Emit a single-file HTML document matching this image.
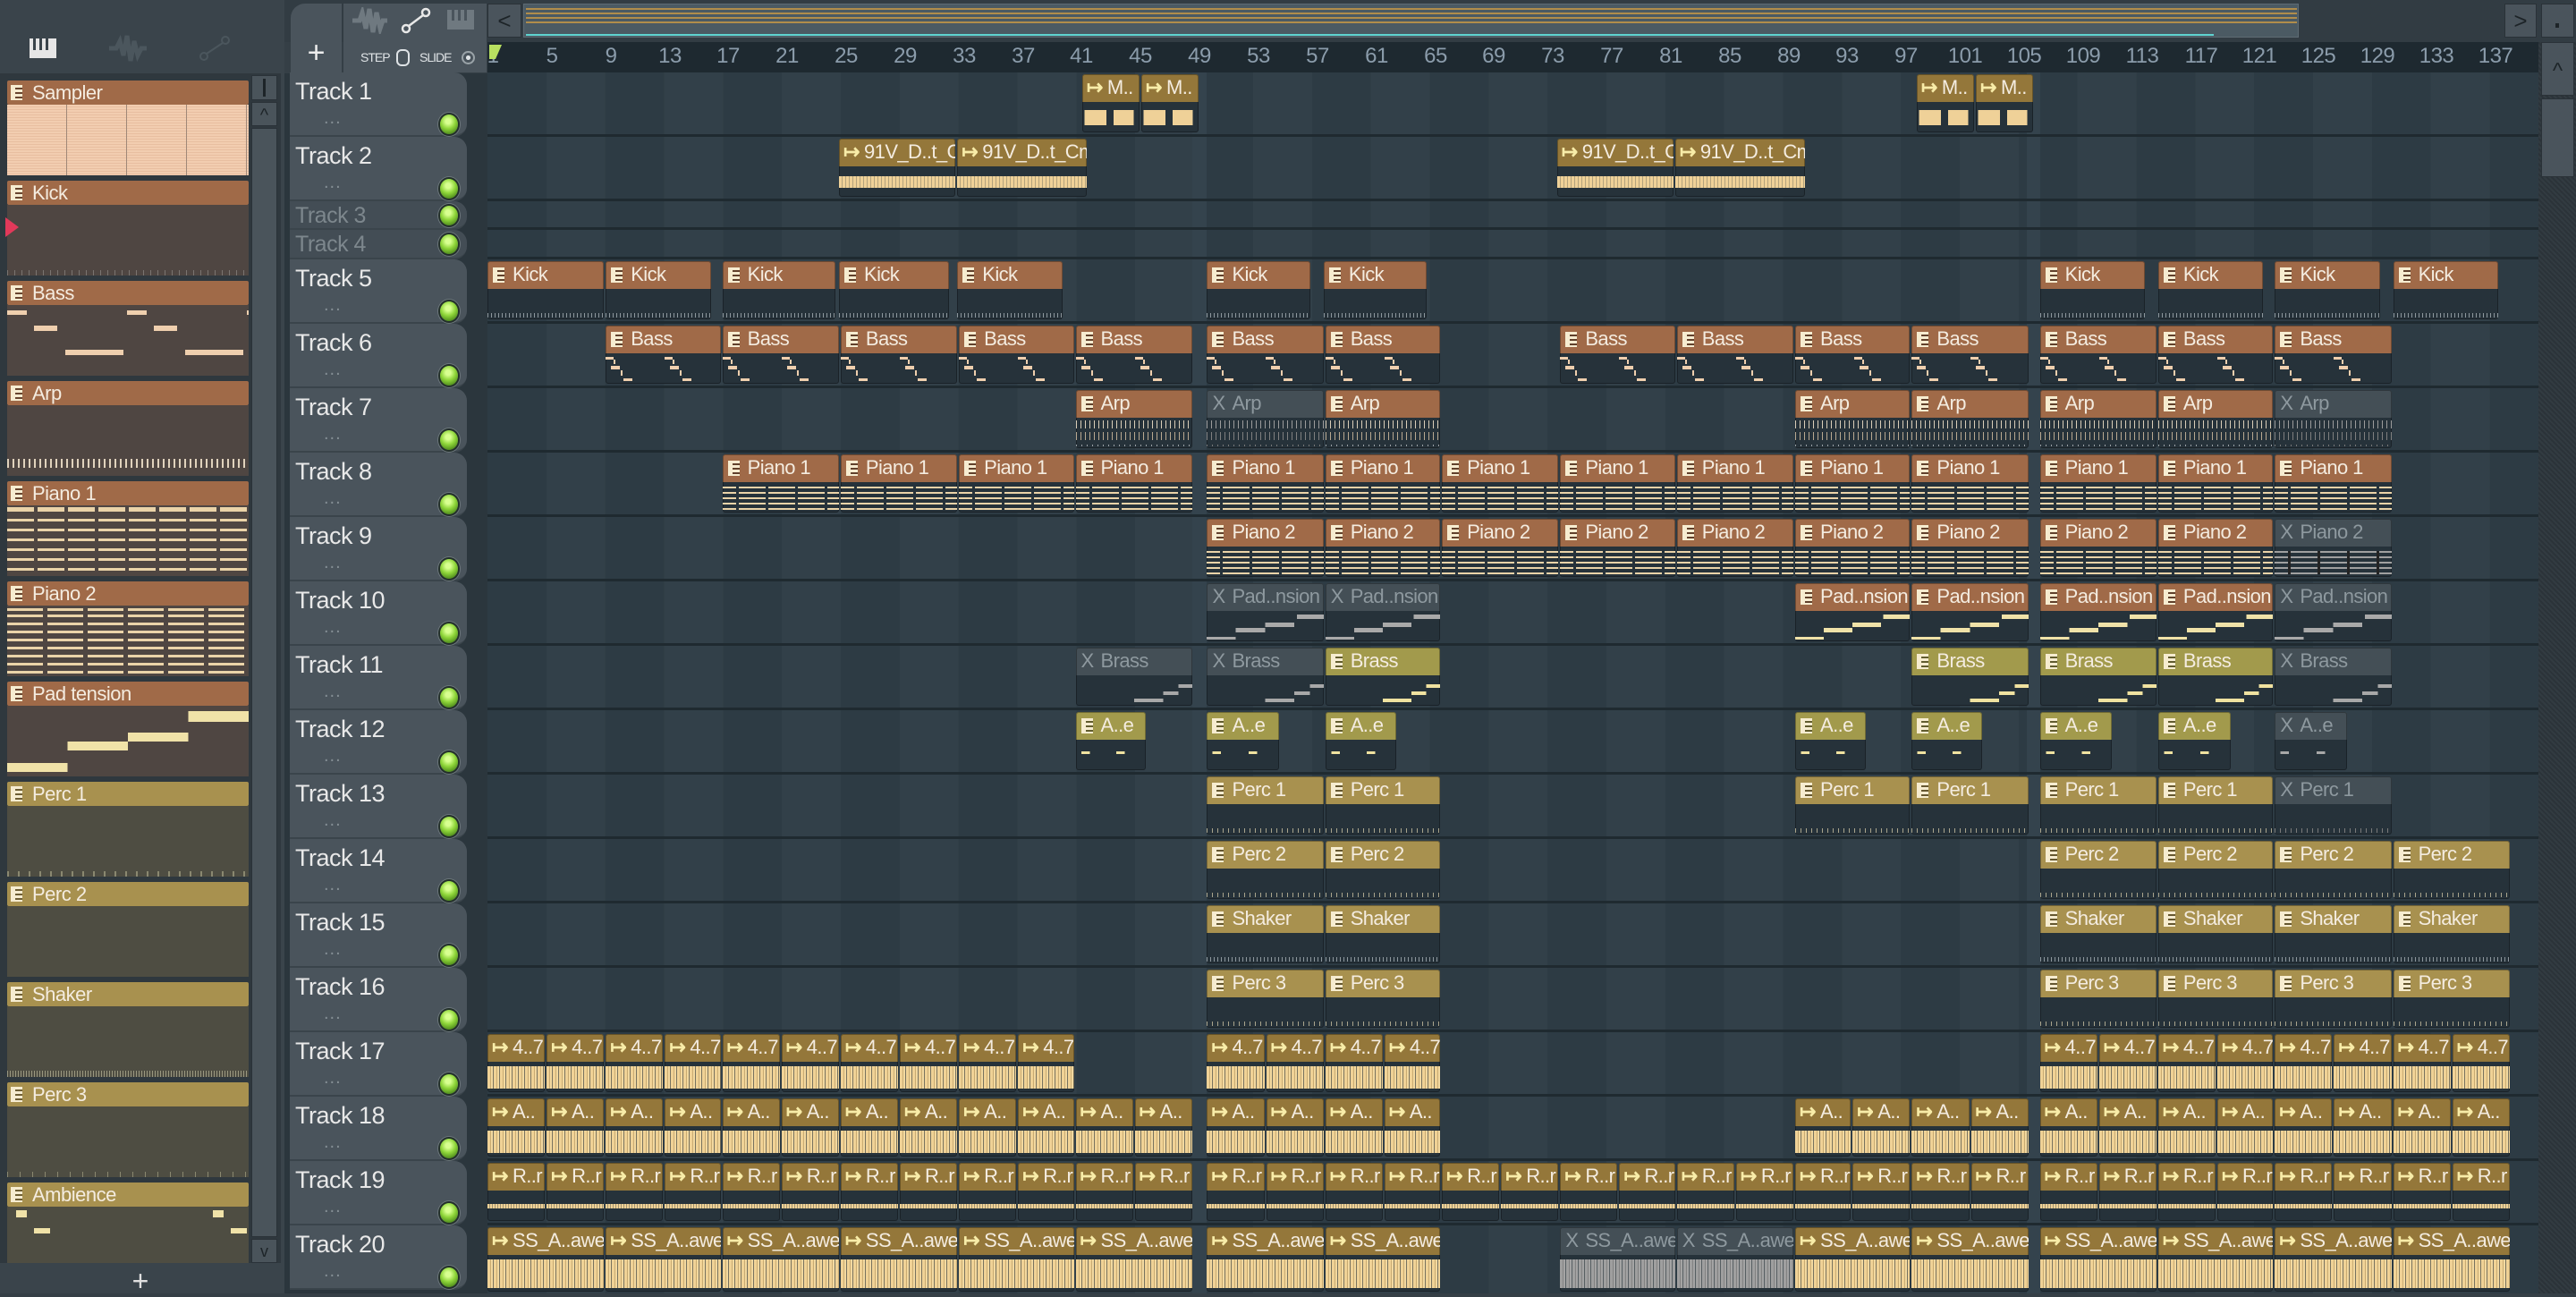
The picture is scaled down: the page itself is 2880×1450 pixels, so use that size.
<!DOCTYPE html>
<html><head><meta charset="utf-8"><style>
*{box-sizing:border-box}
body{margin:0;width:2880px;height:1446px;overflow:hidden;background:#353f46;font-family:"Liberation Sans Narrow","Liberation Sans",sans-serif;position:relative}
.abs{position:absolute}
#lp{position:absolute;left:0;top:0;width:318px;height:1446px;background:#3a444b}
#lpl{position:absolute;left:0;top:82px;width:314px;height:1330px;background:#2f383e}
.li{position:absolute;left:8px;width:270px;height:106px}
.li .h{height:27px;line-height:27px;font-size:22px;letter-spacing:-0.5px;color:#f4ece0;padding-left:28px;position:relative;border-radius:2px;white-space:nowrap}
.li .h::before{content:"";position:absolute;left:4px;top:5px;width:13px;height:17px;background:linear-gradient(90deg,#f6ecd0 0 5px,transparent 5px),repeating-linear-gradient(180deg,#f6ecd0 0 3px,rgba(0,0,0,.35) 3px 5px)}
.li .v{height:79px;position:relative;overflow:hidden}
.br .h{background:#a06a48}.br .v{background:#4f4642}
.gd .h{background:#a8914f}.gd .v{background:#4e4d42}
#thc{position:absolute;left:318px;top:82px;width:227px;height:1364px;background:#2b363d}
.th{position:absolute;left:6px;width:198px;background:#4a545c;border-radius:0 14px 14px 0;border-bottom:2px solid #3a444b}
.th b{position:absolute;left:6px;top:6px;font-weight:normal;font-size:27px;letter-spacing:-0.5px;color:#e8e8e8;white-space:nowrap}
.th i{position:absolute;left:38px;top:40px;font-style:normal;font-size:20px;color:#848e94;letter-spacing:1px}
.th s{position:absolute;left:168px;top:47px;width:20px;height:22px;border-radius:50%;background:radial-gradient(circle at 45% 35%,#d8ff90 0 15%,#8fd63a 45%,#4f8c1c 80%);box-shadow:0 0 0 2px #23302a,0 0 0 3px #6b757b}
.th.sm{background:#434d55}.th.sm b{color:#7d878d;top:2px;font-size:25px}.th.sm s{top:5px}
#grid{position:absolute;left:545px;top:81px;width:2293px;height:1365px;background:repeating-linear-gradient(90deg,#2d3b44 0 65.84px,#324049 65.84px 131.68px)}
.row{position:absolute;left:545px;width:2293px;border-bottom:3px solid #1f2a30}
.c{position:absolute;top:2px;bottom:2px;left:calc(var(--s)*1.8367px - 545.5px);width:calc((var(--e) - var(--s))*1.8367px - 2px);background:linear-gradient(var(--h) 0 31px,#26323a 31px);border-radius:3px;overflow:hidden;white-space:nowrap;font-weight:normal;font-size:22px;letter-spacing:-0.6px;line-height:30px;color:#f4ece0;padding-left:28px;box-shadow:inset 0 0 0 1px rgba(0,0,0,.3)}
.c::before{content:"";position:absolute;left:6px;top:7px;width:13px;height:17px;background:linear-gradient(90deg,#f6ecd0 0 5px,transparent 5px),repeating-linear-gradient(180deg,#f6ecd0 0 3px,rgba(0,0,0,.4) 3px 5px)}
.c::after{content:"";position:absolute;left:0;right:0;top:34px;bottom:2px}
.p{--h:#a06a48}.o{--h:#a29a4c}.g{--h:#a8914f}.a{--h:#94773a}
.m{--h:#444f56;color:#8e999f}
.a::before{content:"↦";background:none;width:auto;height:auto;top:0;left:5px;color:#f8eca8;font-weight:bold;font-size:22px}
.m::before{content:"X";background:none;width:auto;height:auto;top:0;left:6px;color:#8e999f;font-size:22px}
.m::after{filter:grayscale(1) brightness(.75)}
.kk::after{background:repeating-linear-gradient(90deg,#8d979d 0 1px,transparent 1px 4px) 0 100%/100% 5px no-repeat}
.pc::after{background:repeating-linear-gradient(90deg,#a9a48c 0 1px,transparent 1px 6px) 0 100%/100% 5px no-repeat}
.bs::after{background:linear-gradient(90deg,#efcfae 0 9px,transparent 9px) 0 1px/66px 3px repeat-x,linear-gradient(90deg,transparent 0 9px,#efcfae 9px 11px,transparent 11px) 0 4px/66px 5px repeat-x,linear-gradient(90deg,transparent 0 6px,#efcfae 6px 16px,transparent 16px) 0 11px/66px 4px repeat-x,linear-gradient(90deg,transparent 0 17px,#efcfae 17px 19px,transparent 19px) 0 16px/66px 6px repeat-x,linear-gradient(90deg,transparent 0 20px,#efcfae 20px 30px,transparent 30px) 0 25px/66px 3px repeat-x}
.ar::after{background:repeating-linear-gradient(90deg,#d9cdb8 0 1px,transparent 1px 5px) 0 0/100% 9px no-repeat,repeating-linear-gradient(90deg,#b8a890 0 1px,transparent 1px 5px) 0 13px/100% 9px no-repeat,repeating-linear-gradient(90deg,#9aa0a4 0 1px,transparent 1px 6px) 0 27px/100% 7px no-repeat}
.pn::after{top:36px;bottom:3px;background:repeating-linear-gradient(90deg,transparent 0 15px,#26323a 15px 18px,transparent 18px 33px),repeating-linear-gradient(180deg,#ead3a8 0 2px,transparent 2px 6px)}
.pd::after{background:linear-gradient(90deg,transparent 0 77%,#f0e2a8 77%) 0 1px/100% 5px no-repeat,linear-gradient(90deg,transparent 0 50%,#f0e2a8 50% 75%,transparent 75%) 0 10px/100% 5px no-repeat,linear-gradient(90deg,transparent 0 25%,#f0e2a8 25% 50%,transparent 50%) 0 16px/100% 5px no-repeat,linear-gradient(90deg,#f0e2a8 0 25%,transparent 25%) 0 26px/100% 5px no-repeat}
.bz::after{background:linear-gradient(90deg,transparent 0 88%,#f0e2a0 88%) 0 7px/100% 4px no-repeat,linear-gradient(90deg,transparent 0 75%,#f0e2a0 75% 88%,transparent 88%) 0 15px/100% 4px no-repeat,linear-gradient(90deg,transparent 0 50%,#f0e2a0 50% 75%,transparent 75%) 0 23px/100% 4px no-repeat,linear-gradient(90deg,#f0e2a0 0 50%,transparent 50%) 0 31px/100% 4px no-repeat}
.ae::after{background:linear-gradient(90deg,transparent 0 8%,#f0e2a0 8% 20%,transparent 20% 58%,#f0e2a0 58% 70%,transparent 70%) 0 10px/100% 3px no-repeat,linear-gradient(90deg,#f0e2a0 0 4%,transparent 4%) 0 32px/100% 3px no-repeat}
.wv::after{top:36px;bottom:4px;background:repeating-linear-gradient(90deg,#f0d296 0 3px,#c9ab72 3px 4px,#f3d9a0 4px 6px,rgba(240,210,150,.4) 6px 7px)}
.wt::after{top:46px;bottom:14px;background:repeating-linear-gradient(90deg,#f0d296 0 2px,rgba(240,210,150,.6) 2px 3px)}
.wb::after{top:40px;bottom:8px;background:linear-gradient(90deg,transparent 0 4%,#efd198 4% 42%,transparent 42% 55%,#efd198 55% 90%,transparent 90%)}
.w2::after{top:42px;bottom:10px;background:repeating-linear-gradient(90deg,#efd198 0 3px,rgba(239,209,152,.7) 3px 4px)}
#ruler{position:absolute;left:545px;top:47px;width:2293px;height:34px;background:#1e2930}
#ruler span{position:absolute;top:2px;transform:translateX(-50%);font-size:24px;color:#8b9cab;letter-spacing:-0.5px}
</style></head><body>

<div id="lp"></div>
<div class="abs" style="left:33px;top:43px;width:30px;height:22px;background:#e6e6e6"></div>
<div class="abs" style="left:37px;top:43px;width:3px;height:13px;background:#3a444b"></div>
<div class="abs" style="left:44px;top:43px;width:3px;height:13px;background:#3a444b"></div>
<div class="abs" style="left:51px;top:43px;width:3px;height:13px;background:#3a444b"></div>
<svg class="abs" style="left:120px;top:38px" width="46" height="32"><path d="M2 16 L10 16 L14 8 L18 24 L22 2 L26 30 L30 8 L34 24 L38 16 L44 16" stroke="#4b565d" stroke-width="5" fill="none"/></svg>
<svg class="abs" style="left:222px;top:38px" width="36" height="32"><circle cx="6" cy="25" r="4" stroke="#4b565d" stroke-width="2" fill="none"/><circle cx="30" cy="7" r="4" stroke="#4b565d" stroke-width="2" fill="none"/><path d="M9 22 L27 10" stroke="#4b565d" stroke-width="2"/></svg>
<div id="lpl"></div>
<div class="abs" style="left:281px;top:84px;width:29px;height:28px;background:#4a545b;border:1px solid #2a3238"></div>
<div class="abs" style="left:294px;top:88px;width:3px;height:20px;background:#1d2428"></div>
<div class="abs" style="left:281px;top:114px;width:29px;height:27px;background:#4a545b;border:1px solid #2a3238;color:#1d2428;font-size:20px;text-align:center;line-height:28px">^</div>
<div class="abs" style="left:281px;top:143px;width:29px;height:1240px;background:#4a545b;border:1px solid #2a3238"></div>
<div class="abs" style="left:281px;top:1385px;width:29px;height:27px;background:#4a545b;border:1px solid #2a3238;color:#1d2428;font-size:18px;text-align:center;line-height:26px">v</div>
<div class="abs" style="left:0;top:1414px;width:314px;height:32px;background:#3a444b;color:#e0e0e0;font-size:32px;text-align:center;line-height:36px;font-family:'Liberation Sans',sans-serif">+</div>

<div class="li br" style="top:90px"><div class="h">Sampler</div><div class="v" style="background:repeating-linear-gradient(90deg,transparent 0 66px,#a08878 66px 67px),repeating-linear-gradient(180deg,#f2cdb0 0 2px,#e8bea0 2px 3px)"></div></div>
<div class="li br" style="top:202px"><div class="h">Kick</div><div class="v" style="background:repeating-linear-gradient(90deg,#7a7470 0 1px,transparent 1px 8px) 0 100%/100% 6px no-repeat,#4f4642"></div></div>
<div class="li br" style="top:314px"><div class="h">Bass</div><div class="v" style="background:linear-gradient(90deg,#efcfae 0 22px,transparent 22px) 0 6px/134px 5px repeat-x,linear-gradient(90deg,transparent 0 30px,#efcfae 30px 56px,transparent 56px) 0 23px/134px 6px repeat-x,linear-gradient(90deg,transparent 0 65px,#efcfae 65px 130px,transparent 130px) 0 50px/134px 6px repeat-x,#4f4642"></div></div>
<div class="li br" style="top:426px"><div class="h">Arp</div><div class="v" style="background:repeating-linear-gradient(90deg,#e0d2bc 0 2px,transparent 2px 6px) 0 60px/100% 10px no-repeat,#4f4642"></div></div>
<div class="li br" style="top:538px"><div class="h">Piano 1</div><div class="v" style="background:repeating-linear-gradient(90deg,transparent 0 30px,#4f4642 30px 34px),repeating-linear-gradient(180deg,#ead3a8 0 3px,transparent 3px 11px) 0 4px,#4f4642"></div></div>
<div class="li br" style="top:650px"><div class="h">Piano 2</div><div class="v" style="background:repeating-linear-gradient(90deg,transparent 0 40px,#4f4642 40px 45px),repeating-linear-gradient(180deg,#ead3a8 0 3px,transparent 3px 9px) 0 10px,#4f4642"></div></div>
<div class="li br" style="top:762px"><div class="h">Pad tension</div><div class="v" style="background:linear-gradient(90deg,transparent 0 75%,#f0e2a8 75%) 0 6px/100% 12px no-repeat,linear-gradient(90deg,transparent 0 50%,#f0e2a8 50% 75%,transparent 75%) 0 30px/100% 10px no-repeat,linear-gradient(90deg,transparent 0 25%,#f0e2a8 25% 50%,transparent 50%) 0 40px/100% 10px no-repeat,linear-gradient(90deg,#f0e2a8 0 25%,transparent 25%) 0 64px/100% 10px no-repeat,#4f4642"></div></div>
<div class="li gd" style="top:874px"><div class="h">Perc 1</div><div class="v" style="background:repeating-linear-gradient(90deg,#8a8870 0 2px,transparent 2px 12px) 0 100%/100% 6px no-repeat,#4e4d42"></div></div>
<div class="li gd" style="top:986px"><div class="h">Perc 2</div><div class="v" style="background:#4e4d42"></div></div>
<div class="li gd" style="top:1098px"><div class="h">Shaker</div><div class="v" style="background:repeating-linear-gradient(90deg,#9a9880 0 1px,transparent 1px 3px) 0 100%/100% 7px no-repeat,#4e4d42"></div></div>
<div class="li gd" style="top:1210px"><div class="h">Perc 3</div><div class="v" style="background:repeating-linear-gradient(90deg,#8a8870 0 1px,transparent 1px 14px) 0 100%/100% 6px no-repeat,#4e4d42"></div></div>
<div class="li gd" style="top:1322px;height:90px"><div class="h">Ambience</div><div class="v" style="height:63px;background:linear-gradient(90deg,#f0e2a8 0 12px,transparent 12px) 10px 4px/220px 8px repeat-x,linear-gradient(90deg,#f0e2a8 0 18px,transparent 18px) 30px 24px/220px 6px repeat-x,#4e4d42"></div></div>
<div class="abs" style="left:6px;top:243px;width:0;height:0;border-top:11px solid transparent;border-bottom:11px solid transparent;border-left:15px solid #e2395a"></div>

<div class="abs" style="left:318px;top:0;width:2562px;height:47px;background:#323c43"></div>
<div class="abs" style="left:325px;top:4px;width:57px;height:77px;background:#4a545c;border-radius:16px 0 0 0;color:#eee;font-size:34px;text-align:center;line-height:110px;font-family:'Liberation Sans',sans-serif">+</div>
<div class="abs" style="left:384px;top:4px;width:160px;height:77px;background:#4a545c"></div>
<svg class="abs" style="left:392px;top:8px" width="42" height="30"><path d="M2 15 L10 15 L13 6 L17 24 L21 2 L25 28 L29 6 L33 24 L36 15 L41 15" stroke="#6f7980" stroke-width="5" fill="none"/></svg>
<svg class="abs" style="left:448px;top:8px" width="34" height="30"><circle cx="6" cy="24" r="4" stroke="#e8e8e8" stroke-width="2.5" fill="none"/><circle cx="28" cy="6" r="4" stroke="#e8e8e8" stroke-width="2.5" fill="none"/><path d="M9 21 L25 9" stroke="#e8e8e8" stroke-width="2.5"/></svg>
<div class="abs" style="left:500px;top:11px;width:30px;height:22px;background:#6f7980"></div>
<div class="abs" style="left:505px;top:11px;width:3px;height:12px;background:#4a545c"></div>
<div class="abs" style="left:512px;top:11px;width:3px;height:12px;background:#4a545c"></div>
<div class="abs" style="left:519px;top:11px;width:3px;height:12px;background:#4a545c"></div>
<div class="abs" style="left:403px;top:56px;font-size:14px;letter-spacing:-1px;color:#dfe3e6">STEP</div>
<div class="abs" style="left:443px;top:55px;width:15px;height:19px;border:2px solid #dfe3e6;border-radius:6px"></div>
<div class="abs" style="left:469px;top:56px;font-size:14px;letter-spacing:-1px;color:#dfe3e6">SLIDE</div>
<div class="abs" style="left:516px;top:57px;width:15px;height:15px;border:2px solid #9aa3a8;border-radius:50%;background:radial-gradient(#dfe3e6 0 30%,transparent 35%)"></div>
<div class="abs" style="left:545px;top:4px;width:38px;height:38px;background:#4a545c;border:1px solid #2a3238;color:#1d2428;font-size:26px;text-align:center;line-height:36px">&lt;</div>
<div class="abs" style="left:585px;top:4px;width:1985px;height:38px;background:#4b5a63;border:1px solid #5e6b73"></div>
<div class="abs" style="left:588px;top:9px;width:1980px;height:18px;background:repeating-linear-gradient(180deg,#c99a45 0 2px,transparent 2px 5px);opacity:.8"></div>
<div class="abs" style="left:588px;top:38px;width:1887px;height:2px;background:#5fd3d0"></div>
<div class="abs" style="left:2800px;top:4px;width:36px;height:38px;background:#4a545c;border:1px solid #2a3238;color:#1d2428;font-size:26px;text-align:center;line-height:36px">&gt;</div>
<div class="abs" style="left:2841px;top:4px;width:37px;height:38px;background:#4a545c;border:1px solid #2a3238"></div>
<div class="abs" style="left:2857px;top:26px;width:4px;height:5px;background:#1d2428"></div>

<div id="ruler">
<span style="left:6px">1</span><span style="left:72px">5</span><span style="left:138px">9</span><span style="left:204px">13</span><span style="left:269px">17</span><span style="left:335px">21</span><span style="left:401px">25</span><span style="left:467px">29</span><span style="left:533px">33</span><span style="left:599px">37</span><span style="left:664px">41</span><span style="left:730px">45</span><span style="left:796px">49</span><span style="left:862px">53</span><span style="left:928px">57</span><span style="left:994px">61</span><span style="left:1060px">65</span><span style="left:1125px">69</span><span style="left:1191px">73</span><span style="left:1257px">77</span><span style="left:1323px">81</span><span style="left:1389px">85</span><span style="left:1455px">89</span><span style="left:1520px">93</span><span style="left:1586px">97</span><span style="left:1652px">101</span><span style="left:1718px">105</span><span style="left:1784px">109</span><span style="left:1850px">113</span><span style="left:1916px">117</span><span style="left:1981px">121</span><span style="left:2047px">125</span><span style="left:2113px">129</span><span style="left:2179px">133</span><span style="left:2245px">137</span>
</div>
<div class="abs" style="left:547px;top:50px;width:0;height:0;border-left:7px solid #b8e060;border-right:7px solid transparent;border-top:16px solid #b8e060"></div>

<div class="abs" style="left:2838px;top:47px;width:42px;height:1399px;background:repeating-linear-gradient(45deg,#2b3339 0 2px,#323b41 2px 4px)"></div>
<div class="abs" style="left:2841px;top:47px;width:37px;height:60px;background:#4a545c;border:1px solid #2a3238;color:#1d2428;font-size:24px;text-align:center;line-height:64px">^</div>
<div class="abs" style="left:2841px;top:110px;width:37px;height:88px;background:#4a545c;border:1px solid #2a3238"></div>

<div id="thc"></div>
<div class="th" style="top:81px;height:72px;left:324px"><b>Track 1</b><i>...</i><s></s></div>
<div class="th" style="top:153px;height:72px;left:324px"><b>Track 2</b><i>...</i><s></s></div>
<div class="th sm" style="top:225px;height:32px;left:324px"><b>Track 3</b><s></s></div>
<div class="th sm" style="top:257px;height:33px;left:324px"><b>Track 4</b><s></s></div>
<div class="th" style="top:290px;height:72px;left:324px"><b>Track 5</b><i>...</i><s></s></div>
<div class="th" style="top:362px;height:72px;left:324px"><b>Track 6</b><i>...</i><s></s></div>
<div class="th" style="top:434px;height:72px;left:324px"><b>Track 7</b><i>...</i><s></s></div>
<div class="th" style="top:506px;height:72px;left:324px"><b>Track 8</b><i>...</i><s></s></div>
<div class="th" style="top:578px;height:72px;left:324px"><b>Track 9</b><i>...</i><s></s></div>
<div class="th" style="top:650px;height:72px;left:324px"><b>Track 10</b><i>...</i><s></s></div>
<div class="th" style="top:722px;height:72px;left:324px"><b>Track 11</b><i>...</i><s></s></div>
<div class="th" style="top:794px;height:72px;left:324px"><b>Track 12</b><i>...</i><s></s></div>
<div class="th" style="top:866px;height:72px;left:324px"><b>Track 13</b><i>...</i><s></s></div>
<div class="th" style="top:938px;height:72px;left:324px"><b>Track 14</b><i>...</i><s></s></div>
<div class="th" style="top:1010px;height:72px;left:324px"><b>Track 15</b><i>...</i><s></s></div>
<div class="th" style="top:1082px;height:72px;left:324px"><b>Track 16</b><i>...</i><s></s></div>
<div class="th" style="top:1154px;height:72px;left:324px"><b>Track 17</b><i>...</i><s></s></div>
<div class="th" style="top:1226px;height:72px;left:324px"><b>Track 18</b><i>...</i><s></s></div>
<div class="th" style="top:1298px;height:72px;left:324px"><b>Track 19</b><i>...</i><s></s></div>
<div class="th" style="top:1370px;height:72px;left:324px"><b>Track 20</b><i>...</i><s></s></div>

<div id="grid"></div>
<div class="abs" style="left:1333px;top:81px;width:16px;height:1365px;background:#34434d"></div>
<div class="abs" style="left:2266px;top:81px;width:15px;height:1365px;background:#34434d"></div>

<div class="row" style="top:81px;height:72px">
<b class="c a wb" style="--s:659;--e:695">M..</b><b class="c a wb" style="--s:695;--e:731">M..</b><b class="c a wb" style="--s:1167;--e:1203">M..</b><b class="c a wb" style="--s:1203;--e:1239">M..</b>
</div>
<div class="row" style="top:153px;height:72px">
<b class="c a w2" style="--s:511;--e:583">91V_D..t_Cm</b><b class="c a w2" style="--s:583;--e:663">91V_D..t_Cm</b><b class="c a w2" style="--s:948;--e:1020">91V_D..t_Cm</b><b class="c a w2" style="--s:1020;--e:1100">91V_D..t_Cm</b>
</div>
<div class="row" style="top:225px;height:32px"></div>
<div class="row" style="top:257px;height:33px"></div>
<div class="row" style="top:290px;height:72px">
<b class="c p kk" style="--s:297;--e:369">Kick</b><b class="c p kk" style="--s:369;--e:434">Kick</b><b class="c p kk" style="--s:440;--e:510">Kick</b><b class="c p kk" style="--s:511;--e:579">Kick</b><b class="c p kk" style="--s:583;--e:648">Kick</b><b class="c p kk" style="--s:735;--e:799">Kick</b><b class="c p kk" style="--s:806;--e:870">Kick</b><b class="c p kk" style="--s:1242;--e:1307">Kick</b><b class="c p kk" style="--s:1314;--e:1379">Kick</b><b class="c p kk" style="--s:1385;--e:1450">Kick</b><b class="c p kk" style="--s:1457;--e:1522">Kick</b>
</div>
<div class="row" style="top:362px;height:72px">
<b class="c p bs" style="--s:369;--e:440">Bass</b><b class="c p bs" style="--s:440;--e:512">Bass</b><b class="c p bs" style="--s:512;--e:584">Bass</b><b class="c p bs" style="--s:584;--e:655">Bass</b><b class="c p bs" style="--s:655;--e:727">Bass</b><b class="c p bs" style="--s:735;--e:807">Bass</b><b class="c p bs" style="--s:807;--e:878">Bass</b><b class="c p bs" style="--s:950;--e:1021">Bass</b><b class="c p bs" style="--s:1021;--e:1093">Bass</b><b class="c p bs" style="--s:1093;--e:1164">Bass</b><b class="c p bs" style="--s:1164;--e:1236">Bass</b><b class="c p bs" style="--s:1242;--e:1314">Bass</b><b class="c p bs" style="--s:1314;--e:1385">Bass</b><b class="c p bs" style="--s:1385;--e:1457">Bass</b>
</div>
<div class="row" style="top:434px;height:72px">
<b class="c p ar" style="--s:655;--e:727">Arp</b><b class="c m ar" style="--s:735;--e:807">Arp</b><b class="c p ar" style="--s:807;--e:878">Arp</b><b class="c p ar" style="--s:1093;--e:1164">Arp</b><b class="c p ar" style="--s:1164;--e:1236">Arp</b><b class="c p ar" style="--s:1242;--e:1314">Arp</b><b class="c p ar" style="--s:1314;--e:1385">Arp</b><b class="c m ar" style="--s:1385;--e:1457">Arp</b>
</div>
<div class="row" style="top:506px;height:72px">
<b class="c p pn" style="--s:440;--e:512">Piano 1</b><b class="c p pn" style="--s:512;--e:584">Piano 1</b><b class="c p pn" style="--s:584;--e:655">Piano 1</b><b class="c p pn" style="--s:655;--e:727">Piano 1</b><b class="c p pn" style="--s:735;--e:807">Piano 1</b><b class="c p pn" style="--s:807;--e:878">Piano 1</b><b class="c p pn" style="--s:878;--e:950">Piano 1</b><b class="c p pn" style="--s:950;--e:1021">Piano 1</b><b class="c p pn" style="--s:1021;--e:1093">Piano 1</b><b class="c p pn" style="--s:1093;--e:1164">Piano 1</b><b class="c p pn" style="--s:1164;--e:1236">Piano 1</b><b class="c p pn" style="--s:1242;--e:1314">Piano 1</b><b class="c p pn" style="--s:1314;--e:1385">Piano 1</b><b class="c p pn" style="--s:1385;--e:1457">Piano 1</b>
</div>
<div class="row" style="top:578px;height:72px">
<b class="c p pn" style="--s:735;--e:807">Piano 2</b><b class="c p pn" style="--s:807;--e:878">Piano 2</b><b class="c p pn" style="--s:878;--e:950">Piano 2</b><b class="c p pn" style="--s:950;--e:1021">Piano 2</b><b class="c p pn" style="--s:1021;--e:1093">Piano 2</b><b class="c p pn" style="--s:1093;--e:1164">Piano 2</b><b class="c p pn" style="--s:1164;--e:1236">Piano 2</b><b class="c p pn" style="--s:1242;--e:1314">Piano 2</b><b class="c p pn" style="--s:1314;--e:1385">Piano 2</b><b class="c m pn" style="--s:1385;--e:1457">Piano 2</b>
</div>
<div class="row" style="top:650px;height:72px">
<b class="c m pd" style="--s:735;--e:807">Pad..nsion</b><b class="c m pd" style="--s:807;--e:878">Pad..nsion</b><b class="c p pd" style="--s:1093;--e:1164">Pad..nsion</b><b class="c p pd" style="--s:1164;--e:1236">Pad..nsion</b><b class="c p pd" style="--s:1242;--e:1314">Pad..nsion</b><b class="c p pd" style="--s:1314;--e:1385">Pad..nsion</b><b class="c m pd" style="--s:1385;--e:1457">Pad..nsion</b>
</div>
<div class="row" style="top:722px;height:72px">
<b class="c m bz" style="--s:655;--e:727">Brass</b><b class="c m bz" style="--s:735;--e:807">Brass</b><b class="c o bz" style="--s:807;--e:878">Brass</b><b class="c o bz" style="--s:1164;--e:1236">Brass</b><b class="c o bz" style="--s:1242;--e:1314">Brass</b><b class="c o bz" style="--s:1314;--e:1385">Brass</b><b class="c m bz" style="--s:1385;--e:1457">Brass</b>
</div>
<div class="row" style="top:794px;height:72px">
<b class="c o ae" style="--s:655;--e:699">A..e</b><b class="c o ae" style="--s:735;--e:780">A..e</b><b class="c o ae" style="--s:807;--e:851">A..e</b><b class="c o ae" style="--s:1093;--e:1137">A..e</b><b class="c o ae" style="--s:1164;--e:1208">A..e</b><b class="c o ae" style="--s:1242;--e:1287">A..e</b><b class="c o ae" style="--s:1314;--e:1359">A..e</b><b class="c m ae" style="--s:1385;--e:1430">A..e</b>
</div>
<div class="row" style="top:866px;height:72px">
<b class="c g pc" style="--s:735;--e:807">Perc 1</b><b class="c g pc" style="--s:807;--e:878">Perc 1</b><b class="c g pc" style="--s:1093;--e:1164">Perc 1</b><b class="c g pc" style="--s:1164;--e:1236">Perc 1</b><b class="c g pc" style="--s:1242;--e:1314">Perc 1</b><b class="c g pc" style="--s:1314;--e:1385">Perc 1</b><b class="c m pc" style="--s:1385;--e:1457">Perc 1</b>
</div>
<div class="row" style="top:938px;height:72px">
<b class="c g pc" style="--s:735;--e:807">Perc 2</b><b class="c g pc" style="--s:807;--e:878">Perc 2</b><b class="c g pc" style="--s:1242;--e:1314">Perc 2</b><b class="c g pc" style="--s:1314;--e:1385">Perc 2</b><b class="c g pc" style="--s:1385;--e:1457">Perc 2</b><b class="c g pc" style="--s:1457;--e:1529">Perc 2</b>
</div>
<div class="row" style="top:1010px;height:72px">
<b class="c g kk" style="--s:735;--e:807">Shaker</b><b class="c g kk" style="--s:807;--e:878">Shaker</b><b class="c g kk" style="--s:1242;--e:1314">Shaker</b><b class="c g kk" style="--s:1314;--e:1385">Shaker</b><b class="c g kk" style="--s:1385;--e:1457">Shaker</b><b class="c g kk" style="--s:1457;--e:1529">Shaker</b>
</div>
<div class="row" style="top:1082px;height:72px">
<b class="c g pc" style="--s:735;--e:807">Perc 3</b><b class="c g pc" style="--s:807;--e:878">Perc 3</b><b class="c g pc" style="--s:1242;--e:1314">Perc 3</b><b class="c g pc" style="--s:1314;--e:1385">Perc 3</b><b class="c g pc" style="--s:1385;--e:1457">Perc 3</b><b class="c g pc" style="--s:1457;--e:1529">Perc 3</b>
</div>
<div class="row" style="top:1154px;height:72px">
<b class="c a wv" style="--s:297;--e:333">4..7</b><b class="c a wv" style="--s:333;--e:369">4..7</b><b class="c a wv" style="--s:369;--e:405">4..7</b><b class="c a wv" style="--s:405;--e:440">4..7</b><b class="c a wv" style="--s:440;--e:476">4..7</b><b class="c a wv" style="--s:476;--e:512">4..7</b><b class="c a wv" style="--s:512;--e:548">4..7</b><b class="c a wv" style="--s:548;--e:584">4..7</b><b class="c a wv" style="--s:584;--e:620">4..7</b><b class="c a wv" style="--s:620;--e:655">4..7</b>
<b class="c a wv" style="--s:735;--e:771">4..7</b><b class="c a wv" style="--s:771;--e:807">4..7</b><b class="c a wv" style="--s:807;--e:843">4..7</b><b class="c a wv" style="--s:843;--e:878">4..7</b>
<b class="c a wv" style="--s:1242;--e:1278">4..7</b><b class="c a wv" style="--s:1278;--e:1314">4..7</b><b class="c a wv" style="--s:1314;--e:1350">4..7</b><b class="c a wv" style="--s:1350;--e:1385">4..7</b><b class="c a wv" style="--s:1385;--e:1421">4..7</b><b class="c a wv" style="--s:1421;--e:1457">4..7</b><b class="c a wv" style="--s:1457;--e:1493">4..7</b><b class="c a wv" style="--s:1493;--e:1529">4..7</b>
</div>
<div class="row" style="top:1226px;height:72px">
<b class="c a wv" style="--s:297;--e:333">A..</b><b class="c a wv" style="--s:333;--e:369">A..</b><b class="c a wv" style="--s:369;--e:405">A..</b><b class="c a wv" style="--s:405;--e:440">A..</b><b class="c a wv" style="--s:440;--e:476">A..</b><b class="c a wv" style="--s:476;--e:512">A..</b><b class="c a wv" style="--s:512;--e:548">A..</b><b class="c a wv" style="--s:548;--e:584">A..</b><b class="c a wv" style="--s:584;--e:620">A..</b><b class="c a wv" style="--s:620;--e:655">A..</b><b class="c a wv" style="--s:655;--e:691">A..</b><b class="c a wv" style="--s:691;--e:727">A..</b>
<b class="c a wv" style="--s:735;--e:771">A..</b><b class="c a wv" style="--s:771;--e:807">A..</b><b class="c a wv" style="--s:807;--e:843">A..</b><b class="c a wv" style="--s:843;--e:878">A..</b>
<b class="c a wv" style="--s:1093;--e:1128">A..</b><b class="c a wv" style="--s:1128;--e:1164">A..</b><b class="c a wv" style="--s:1164;--e:1200">A..</b><b class="c a wv" style="--s:1200;--e:1236">A..</b>
<b class="c a wv" style="--s:1242;--e:1278">A..</b><b class="c a wv" style="--s:1278;--e:1314">A..</b><b class="c a wv" style="--s:1314;--e:1350">A..</b><b class="c a wv" style="--s:1350;--e:1385">A..</b><b class="c a wv" style="--s:1385;--e:1421">A..</b><b class="c a wv" style="--s:1421;--e:1457">A..</b><b class="c a wv" style="--s:1457;--e:1493">A..</b><b class="c a wv" style="--s:1493;--e:1529">A..</b>
</div>
<div class="row" style="top:1298px;height:72px">
<b class="c a wt" style="--s:297;--e:333">R..r</b><b class="c a wt" style="--s:333;--e:369">R..r</b><b class="c a wt" style="--s:369;--e:405">R..r</b><b class="c a wt" style="--s:405;--e:440">R..r</b><b class="c a wt" style="--s:440;--e:476">R..r</b><b class="c a wt" style="--s:476;--e:512">R..r</b><b class="c a wt" style="--s:512;--e:548">R..r</b><b class="c a wt" style="--s:548;--e:584">R..r</b><b class="c a wt" style="--s:584;--e:620">R..r</b><b class="c a wt" style="--s:620;--e:655">R..r</b><b class="c a wt" style="--s:655;--e:691">R..r</b><b class="c a wt" style="--s:691;--e:727">R..r</b>
<b class="c a wt" style="--s:735;--e:771">R..r</b><b class="c a wt" style="--s:771;--e:807">R..r</b><b class="c a wt" style="--s:807;--e:843">R..r</b><b class="c a wt" style="--s:843;--e:878">R..r</b><b class="c a wt" style="--s:878;--e:914">R..r</b><b class="c a wt" style="--s:914;--e:950">R..r</b><b class="c a wt" style="--s:950;--e:986">R..r</b><b class="c a wt" style="--s:986;--e:1021">R..r</b><b class="c a wt" style="--s:1021;--e:1057">R..r</b><b class="c a wt" style="--s:1057;--e:1093">R..r</b><b class="c a wt" style="--s:1093;--e:1128">R..r</b><b class="c a wt" style="--s:1128;--e:1164">R..r</b><b class="c a wt" style="--s:1164;--e:1200">R..r</b><b class="c a wt" style="--s:1200;--e:1236">R..r</b>
<b class="c a wt" style="--s:1242;--e:1278">R..r</b><b class="c a wt" style="--s:1278;--e:1314">R..r</b><b class="c a wt" style="--s:1314;--e:1350">R..r</b><b class="c a wt" style="--s:1350;--e:1385">R..r</b><b class="c a wt" style="--s:1385;--e:1421">R..r</b><b class="c a wt" style="--s:1421;--e:1457">R..r</b><b class="c a wt" style="--s:1457;--e:1493">R..r</b><b class="c a wt" style="--s:1493;--e:1529">R..r</b>
</div>
<div class="row" style="top:1370px;height:76px;border-bottom:0">
<b class="c a wv" style="--s:297;--e:369">SS_A..aweli</b><b class="c a wv" style="--s:369;--e:440">SS_A..aweli</b><b class="c a wv" style="--s:440;--e:512">SS_A..aweli</b><b class="c a wv" style="--s:512;--e:584">SS_A..aweli</b><b class="c a wv" style="--s:584;--e:655">SS_A..aweli</b><b class="c a wv" style="--s:655;--e:727">SS_A..aweli</b>
<b class="c a wv" style="--s:735;--e:807">SS_A..aweli</b><b class="c a wv" style="--s:807;--e:878">SS_A..aweli</b><b class="c m wv" style="--s:950;--e:1021">SS_A..aweli</b><b class="c m wv" style="--s:1021;--e:1093">SS_A..aweli</b><b class="c a wv" style="--s:1093;--e:1164">SS_A..aweli</b><b class="c a wv" style="--s:1164;--e:1236">SS_A..aweli</b>
<b class="c a wv" style="--s:1242;--e:1314">SS_A..aweli</b><b class="c a wv" style="--s:1314;--e:1385">SS_A..aweli</b><b class="c a wv" style="--s:1385;--e:1457">SS_A..aweli</b><b class="c a wv" style="--s:1457;--e:1529">SS_A..aweli</b>
</div>
</body></html>
